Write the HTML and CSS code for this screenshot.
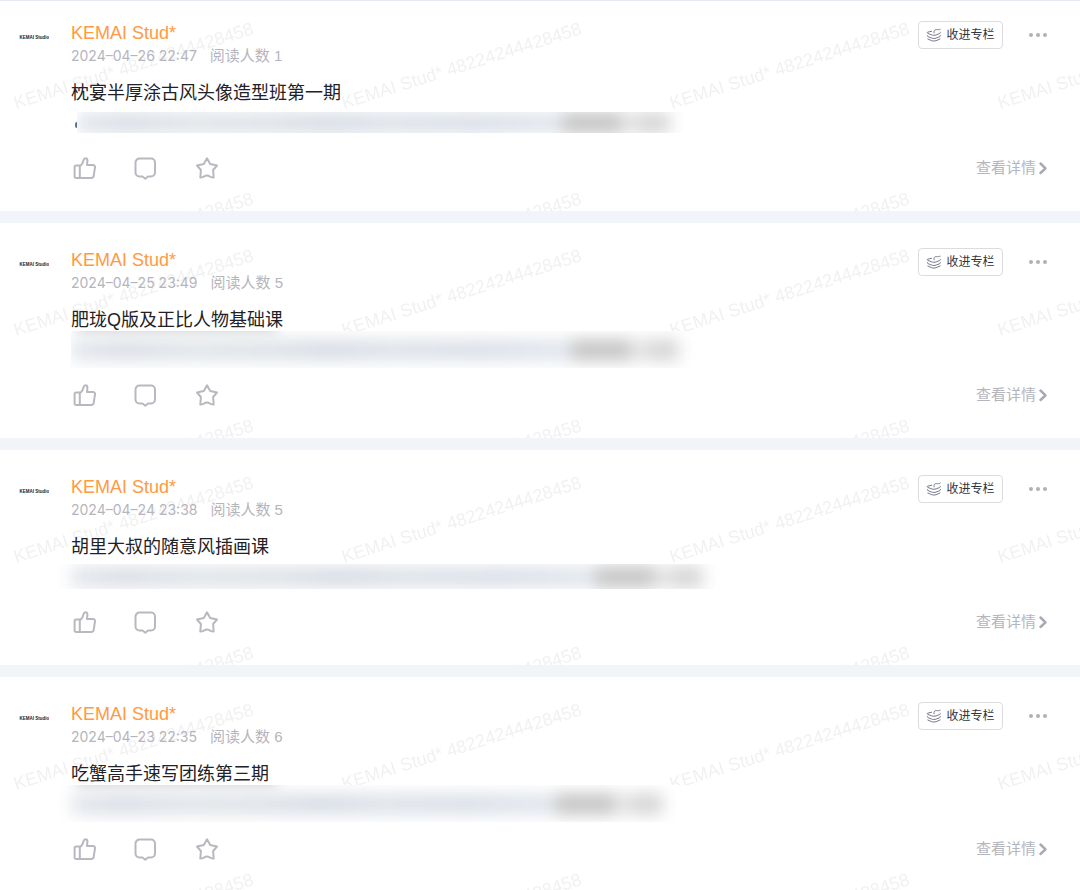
FILE: index.html
```html
<!DOCTYPE html>
<html lang="zh-CN">
<head>
<meta charset="utf-8">
<title>KEMAI Stud*</title>
<meta name="viewport" content="width=device-width, initial-scale=1">
<link rel="stylesheet" href="styles.css">
</head>
<body>
<svg class="defs" aria-hidden="true">
  <defs>
    <pattern id="mark" width="328" height="170" patternUnits="userSpaceOnUse">
      <text class="mark-text" transform="translate(16 113) rotate(-17.5)">KEMAI Stud* 48224244428458</text>
    </pattern>
    <symbol id="like" viewBox="0 0 24 24"><path d="M1.600 11.200a1.600 1.600 0 0 1 1.600-1.600h4.400c1.800-1.200 2.500-3.200 3-5.600.3-1.300 1-1.900 2-1.800 1.300.1 1.900 1.200 1.800 2.600L14 9h6a2 2 0 0 1 2 2.300l-1.300 8.600a2.600 2.600 0 0 1-2.600 2.200H3.200a1.600 1.600 0 0 1-1.600-1.600z"/><path d="M6.800 9.800v12.100"/></symbol>
    <symbol id="comment" viewBox="0 0 24 24"><path d="M5.500 2.500h11.500a4 4 0 0 1 4 4v10a4 4 0 0 1-4 4h-3L11.300 22.700 8.500 20.500h-3a4 4 0 0 1-4-4v-10a4 4 0 0 1 4-4z"/></symbol>
    <symbol id="star" viewBox="0 0 24 24"><path d="M12 2.300l3.200 5.700 6.800 1.500-3.900 4.500.6 7.500c-2.700.2-4.200-1.900-6.700-1.900s-4 2.100-6.700 1.900l.6-7.500L2 9.500 8.800 8z"/></symbol>
    <symbol id="stack" viewBox="0 0 16 16"><path d="M5.600 4.300 1.500 5.200c-.5.400-.3.900.3 1.200l3.900 1.500c1.400.5 3 .5 4.400 0l3.600-1.400c.8-.4.900-.9.500-1.400M8 5.800c-.5-2 .6-3.300 2.600-3.200 1.200.1 2.300.2 3.600-.4M1.400 8.700c-.1.500.2.700.6.900l3.700 1.500c1.400.5 3 .5 4.400 0l3.700-1.500c.6-.3.800-.6.600-1.100M1.800 12l3.900 1.700c1.400.5 3 .5 4.400 0L14 12"/></symbol>
    <symbol id="dots" viewBox="0 0 20 6"><circle cx="3" cy="3" r="2"/><circle cx="10" cy="3" r="2"/><circle cx="17" cy="3" r="2"/></symbol>
    <symbol id="next" viewBox="0 0 10 14"><path d="M2.500 2.500l5 4.800-5 4.700"/></symbol>
    <symbol id="avatar" viewBox="0 0 60 60"><text x="1" y="34">KEMAI Studio</text></symbol>
  </defs>
</svg>

<main class="feed">
  <article class="card">
    <svg class="watermark" aria-hidden="true"><rect width="100%" height="100%" fill="url(#mark)"/></svg>
    <svg class="avatar" role="img" aria-label="KEMAI Studio"><use href="#avatar"/></svg>
    <div class="body">
      <header class="head">
        <div class="meta">
          <a class="name" href="#">KEMAI Stud*</a>
          <p class="info"><time class="date">2024–04–26 22:47</time><span>阅读人数 1</span></p>
        </div>
        <button class="save" type="button"><svg><use href="#stack"/></svg>收进专栏</button>
        <button class="more" type="button" aria-label="更多"><svg><use href="#dots"/></svg></button>
      </header>
      <h2 class="title">枕宴半厚涂古风头像造型班第一期</h2>
      <div class="hidden-link"><i class="tick"></i><div class="strip strip-low"><div class="smear"><i class="link" style="width:485px"></i><i class="code"></i><i class="tail"></i></div></div></div>
      <footer class="foot">
        <button class="icon" type="button" aria-label="点赞"><svg><use href="#like"/></svg></button>
        <button class="icon" type="button" aria-label="评论"><svg><use href="#comment"/></svg></button>
        <button class="icon" type="button" aria-label="收藏"><svg><use href="#star"/></svg></button>
        <a class="detail" href="#">查看详情<svg><use href="#next"/></svg></a>
      </footer>
    </div>
  </article>

  <article class="card">
    <svg class="watermark" aria-hidden="true"><rect width="100%" height="100%" fill="url(#mark)"/></svg>
    <svg class="avatar" role="img" aria-label="KEMAI Studio"><use href="#avatar"/></svg>
    <div class="body">
      <header class="head">
        <div class="meta">
          <a class="name" href="#">KEMAI Stud*</a>
          <p class="info"><time class="date">2024–04–25 23:49</time><span>阅读人数 5</span></p>
        </div>
        <button class="save" type="button"><svg><use href="#stack"/></svg>收进专栏</button>
        <button class="more" type="button" aria-label="更多"><svg><use href="#dots"/></svg></button>
      </header>
      <h2 class="title">肥珑Q版及正比人物基础课</h2>
      <div class="hidden-link"><div class="strip strip-tall strip-cut"><div class="smear"><i class="link" style="width:500px"></i><i class="code"></i><i class="tail"></i></div></div></div>
      <footer class="foot">
        <button class="icon" type="button" aria-label="点赞"><svg><use href="#like"/></svg></button>
        <button class="icon" type="button" aria-label="评论"><svg><use href="#comment"/></svg></button>
        <button class="icon" type="button" aria-label="收藏"><svg><use href="#star"/></svg></button>
        <a class="detail" href="#">查看详情<svg><use href="#next"/></svg></a>
      </footer>
    </div>
  </article>

  <article class="card">
    <svg class="watermark" aria-hidden="true"><rect width="100%" height="100%" fill="url(#mark)"/></svg>
    <svg class="avatar" role="img" aria-label="KEMAI Studio"><use href="#avatar"/></svg>
    <div class="body">
      <header class="head">
        <div class="meta">
          <a class="name" href="#">KEMAI Stud*</a>
          <p class="info"><time class="date">2024–04–24 23:38</time><span>阅读人数 5</span></p>
        </div>
        <button class="save" type="button"><svg><use href="#stack"/></svg>收进专栏</button>
        <button class="more" type="button" aria-label="更多"><svg><use href="#dots"/></svg></button>
      </header>
      <h2 class="title">胡里大叔的随意风插画课</h2>
      <div class="hidden-link"><div class="strip strip-mid"><div class="smear"><i class="link" style="width:524px"></i><i class="code"></i><i class="tail"></i></div></div></div>
      <footer class="foot">
        <button class="icon" type="button" aria-label="点赞"><svg><use href="#like"/></svg></button>
        <button class="icon" type="button" aria-label="评论"><svg><use href="#comment"/></svg></button>
        <button class="icon" type="button" aria-label="收藏"><svg><use href="#star"/></svg></button>
        <a class="detail" href="#">查看详情<svg><use href="#next"/></svg></a>
      </footer>
    </div>
  </article>

  <article class="card">
    <svg class="watermark" aria-hidden="true"><rect width="100%" height="100%" fill="url(#mark)"/></svg>
    <svg class="avatar" role="img" aria-label="KEMAI Studio"><use href="#avatar"/></svg>
    <div class="body">
      <header class="head">
        <div class="meta">
          <a class="name" href="#">KEMAI Stud*</a>
          <p class="info"><time class="date">2024–04–23 22:35</time><span>阅读人数 6</span></p>
        </div>
        <button class="save" type="button"><svg><use href="#stack"/></svg>收进专栏</button>
        <button class="more" type="button" aria-label="更多"><svg><use href="#dots"/></svg></button>
      </header>
      <h2 class="title">吃蟹高手速写团练第三期</h2>
      <div class="hidden-link"><div class="strip strip-tall"><div class="smear"><i class="link" style="width:484px"></i><i class="code"></i><i class="tail"></i></div></div></div>
      <footer class="foot">
        <button class="icon" type="button" aria-label="点赞"><svg><use href="#like"/></svg></button>
        <button class="icon" type="button" aria-label="评论"><svg><use href="#comment"/></svg></button>
        <button class="icon" type="button" aria-label="收藏"><svg><use href="#star"/></svg></button>
        <a class="detail" href="#">查看详情<svg><use href="#next"/></svg></a>
      </footer>
    </div>
  </article>
</main>
</body>
</html>
```

FILE: styles.css
```css
* {
  box-sizing: border-box;
}

body {
  margin: 0;
  background: #f1f5fa;
  color: #222226;
  font-family: "Liberation Sans", "Noto Sans CJK SC", sans-serif;
}

button {
  margin: 0;
  padding: 0;
  border: 0;
  background: none;
  color: inherit;
  font: inherit;
  cursor: pointer;
}

a {
  color: inherit;
  text-decoration: none;
}

svg {
  display: block;
  fill: none;
  stroke-linecap: round;
  stroke-linejoin: round;
}

.defs {
  position: absolute;
  width: 0;
  height: 0;
}

.mark-text {
  fill: #f1f1f2;
  font-size: 18px;
}

.feed {
  display: flex;
  flex-direction: column;
  gap: 12px;
  border-top: 1px solid #e4e9f4;
}

.card {
  position: relative;
  display: flex;
  overflow: hidden;
  padding: 25px 32px 31px 19px;
  background: #fff;
}

.card:first-child {
  padding-top: 20px;
}

.watermark {
  position: absolute;
  bottom: 0;
  left: 0;
  width: 100%;
  height: 215px;
}

.avatar {
  position: relative;
  flex: none;
  width: 30px;
  height: 32px;
  margin-right: 22px;
  fill: #222226;
  font-size: 9px;
  font-weight: 700;
}

.body {
  position: relative;
  flex: 1;
  min-width: 0;
}

.head {
  display: flex;
  align-items: flex-start;
}

.meta {
  flex: 1;
}

.name {
  display: block;
  color: #ff9a42;
  font-size: 18px;
  line-height: 24px;
}

.info {
  display: flex;
  gap: 13px;
  margin: 0;
  color: #b5b5bd;
  font-size: 15px;
  line-height: 22px;
}

.date {
  font-family: Inter, sans-serif;
  font-size: 14px;
}

.save {
  display: flex;
  align-items: center;
  justify-content: center;
  gap: 4px;
  width: 85px;
  height: 28px;
  margin-right: 25px;
  border: 1px solid #dcdce0;
  border-radius: 4px;
  background: #fff;
  color: #33343c;
  font-size: 12px;
  line-height: 16px;
}

.save svg {
  width: 16px;
  height: 16px;
  stroke: #77798c;
}

.more {
  display: flex;
  align-items: center;
  height: 28px;
}

.more svg {
  width: 20px;
  height: 6px;
  fill: #b0b0b9;
}

.title {
  margin: 15px 0 0;
  font-size: 18px;
  font-weight: 400;
  line-height: 22px;
}

.hidden-link {
  display: flex;
  align-items: center;
  height: 37px;
}

.tick {
  width: 2px;
  height: 6px;
  margin: 4px 0 0 4px;
  border-radius: 2px 0 0 2px;
  background: #5b7390;
}

.strip {
  position: relative;
  display: flex;
  align-items: center;
  padding-right: 24px;
  background: #fff;
}

.strip-low {
  height: 21px;
  overflow: clip;
}

.strip-mid {
  height: 25px;
  overflow-x: visible;
  overflow-y: clip;
}

.strip-tall {
  height: 37px;
  overflow-x: visible;
  overflow-y: clip;
}

.strip-tall::before {
  content: "";
  position: absolute;
  top: -10px;
  left: 6px;
  width: 200px;
  height: 12px;
  background: #d2d2d4;
  filter: blur(6px);
}

.strip-cut {
  overflow-x: clip;
}

.smear {
  display: flex;
  filter: blur(8px);
}

.smear i {
  height: 22px;
}

.link {
  background: linear-gradient(90deg, #e4e8ed, #dcdfe7 10%, #e1e6ea 24%, #dfe3e8 40%, #d9dee6 52%, #dfe4ea 64%, #dce1e9 82%, #e3e8ee);
}

.code {
  width: 60px;
  background: #c6c6c6;
}

.tail {
  width: 48px;
  background: linear-gradient(90deg, #ececec, #d4d4d4 60%, #dadada);
}

.foot {
  display: flex;
  align-items: center;
  gap: 37px;
  margin-top: 15px;
}

.icon svg {
  width: 24px;
  height: 24px;
  stroke: #b8b8c1;
  stroke-width: 2;
}

.icon:first-child {
  margin-left: 2px;
}

.detail {
  display: flex;
  align-items: center;
  gap: 2px;
  margin-left: auto;
  color: #b5b5bd;
  font-size: 15px;
  line-height: 24px;
}

.detail svg {
  width: 10px;
  height: 14px;
  stroke: #a9a9b3;
  stroke-width: 2.5;
}
```
